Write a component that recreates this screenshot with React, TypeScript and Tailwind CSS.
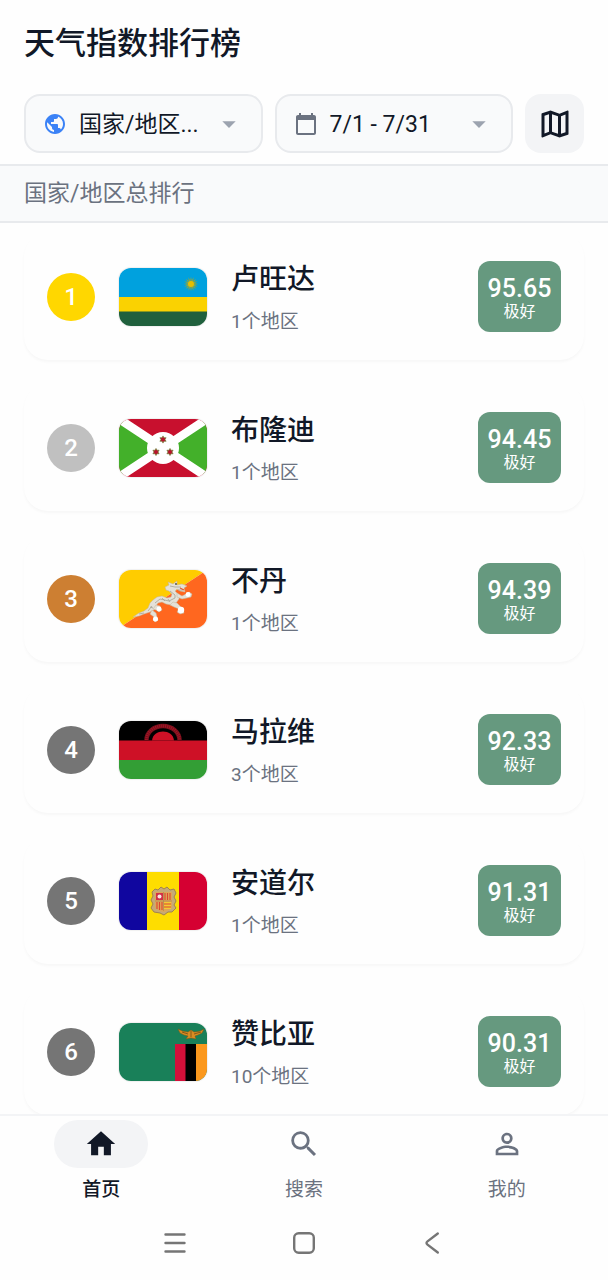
import type { ReactNode } from "react";
import {
  MdArrowDropDown,
  MdCalendarToday,
  MdHome,
  MdOutlineMap,
  MdPersonOutline,
  MdPublic,
  MdSearch,
} from "react-icons/md";

const star = (cx: number, cy: number, outer: number, inner: number, points: number) =>
  Array.from({ length: points * 2 }, (_, i) => {
    const r = i % 2 === 0 ? outer : inner;
    const a = (Math.PI * i) / points - Math.PI / 2;
    return `${(cx + r * Math.cos(a)).toFixed(2)},${(cy + r * Math.sin(a)).toFixed(2)}`;
  }).join(" ");

function Flag({ label, children }: { label: string; children: ReactNode }) {
  return (
    <svg
      viewBox="0 0 88 58"
      role="img"
      aria-label={label}
      className="h-[58px] w-[88px] shrink-0 rounded-xl shadow-[0_0_1px_1px_rgba(0,0,0,0.06)]"
    >
      {children}
    </svg>
  );
}

const Rwanda = () => (
  <Flag label="卢旺达">
    <rect width="88" height="29" fill="#00a1de" />
    <rect y="29" width="88" height="15" fill="#fad201" />
    <rect y="43.500" width="88" height="15" fill="#20603d" />
    <polygon points={star(72, 16, 7.2, 3.6, 16)} fill="#9fa62b" />
    <circle cx="72" cy="16" r="3.600" fill="#e5be01" stroke="#4b9d87" strokeWidth="0.700" />
  </Flag>
);

const Burundi = () => (
  <Flag label="布隆迪">
    <rect width="88" height="58" fill="#c8102e" />
    <path d="M0 0 44 29 0 58ZM88 0 44 29 88 58Z" fill="#43b02a" />
    <path d="M0 0 88 58M88 0 0 58" stroke="#fff" strokeWidth="8.500" />
    <circle cx="44" cy="29" r="16" fill="#fff" />
    {[
      [44, 20.5],
      [37, 33],
      [51, 33],
    ].map(([x, y]) => (
      <polygon
        key={`${x}-${y}`}
        points={star(x, y, 3.6, 2, 6)}
        fill="#b8142d"
        stroke="#5f7d2a"
        strokeWidth="0.600"
      />
    ))}
  </Flag>
);

const Bhutan = () => (
  <Flag label="不丹">
    <path d="M0 0H88L0 58Z" fill="#ffcc00" />
    <path d="M88 0V58H0Z" fill="#ff671f" />
    <g stroke="#c4b79c" strokeWidth="0.500" fill="#e4e1d8" strokeLinejoin="round">
      <path d="M14 47 20 43 25 41 29 38 31 33 34 30 38 27 43 26 48 28 52 27 53 24 50 21 47 20 46 17 50 15 49 12 54 14 58 11 58 15 63 14 68 16 65 18 66 22 61 21 58 19 56 21 60 25 60 29 57 33 52 35 47 34 43 32 39 33 37 36 35 40 31 42 25 44 20 46Z" />
      <path d="M58 23 63 26 67 24 70 22 73 24 72 27 68 28 63 29 58 27ZM54 32 58 33 62 37 64 39 65 43 61 44 58 42 60 39 55 37 51 35ZM37 35 41 36 43 40 40 42 37 40 34 39ZM33 40 37 43 38 47 39 50 36 52 34 50 35 47 31 44Z" />
    </g>
    <g fill="#fff">
      <circle cx="69" cy="24.500" r="2.400" />
      <circle cx="62" cy="40" r="3.200" />
      <circle cx="40" cy="39" r="2.400" />
      <circle cx="36.500" cy="49" r="2.500" />
    </g>
    <path
      d="M20 44 25 43M29 41 33 36M36 33 41 29 50 31 56 28 56 25 51 21M51 16 56 17 62 17M59 20 64 20M43 28 46 31M49 29 51 32M31 37 34 38"
      fill="none"
      stroke="#a3a297"
      strokeWidth="0.800"
    />
    <circle cx="57" cy="14" r="0.900" fill="#4a4a44" />
    <path d="M61 18 65 20" stroke="#e4502a" strokeWidth="1.200" />
  </Flag>
);

const Malawi = () => (
  <Flag label="马拉维">
    <rect width="88" height="20" fill="#000" />
    <rect y="19.500" width="88" height="20" fill="#ce1126" />
    <rect y="39" width="88" height="19" fill="#339e35" />
    <path d="M27.500 19A16.500 14 0 0 1 60.500 19" fill="none" stroke="#76101c" strokeWidth="4.500" />
    <path
      d="M27.500 19A16.500 14 0 0 1 60.500 19"
      fill="none"
      stroke="#a31525"
      strokeWidth="3"
      strokeDasharray="1 1"
    />
    <path d="M33 19.500C34 7.500 54 7.500 55 19.500Z" fill="#ce1126" />
  </Flag>
);

const Andorra = () => (
  <Flag label="安道尔">
    <rect width="29" height="58" fill="#10069f" />
    <rect x="28" width="32" height="58" fill="#fedd00" />
    <rect x="60" width="28" height="58" fill="#d50032" />
    <path
      d="M33 20 36 17 39 18 42 15 45 17 48 15 51 18 55 17 57 21 55 25 57 29 55 33 57 36 53 40 49 40 45 43 41 41 35 40 32 36 34 32 32 28 34 24Z"
      fill="#c6aa76"
      stroke="#a08250"
      strokeWidth="1"
    />
    <path d="M36 20H53V35Q52 38 44.500 40Q37 38 36 35Z" fill="#dfa558" />
    <rect x="37" y="21" width="7" height="7" fill="#d22f45" />
    <circle cx="40.500" cy="24.500" r="2" fill="#f6e7e2" />
    <path d="M46 21V28M48.500 21V28M51 21V28M38 30V37M40.500 30V38M43 30V38" stroke="#dc4630" strokeWidth="1.100" />
    <rect x="45" y="30" width="7" height="7" fill="#f4ca35" />
    <path d="M45 32H52M45 35H52" stroke="#dc4630" strokeWidth="1" />
    <path d="M36 29H53M44.500 20V39" stroke="#a98b52" strokeWidth="0.700" />
  </Flag>
);

const Zambia = () => (
  <Flag label="赞比亚">
    <rect width="88" height="58" fill="#198059" />
    <rect x="56" y="21" width="11" height="37" fill="#d4103a" />
    <rect x="66.500" y="21" width="11" height="37" fill="#000" />
    <rect x="77" y="21" width="11" height="37" fill="#fb981d" />
    <path
      d="M59 6Q64 9 69 9L72 7 75 9Q81 9 85 6L83 10 79 12 76 13 77 16 72 15 67 16 69 13 65 12 61 10Z"
      fill="#d98c22"
      stroke="#7d5519"
      strokeWidth="0.500"
    />
    <path d="M63 9 69 11M82 9 75 11M72 8V14" stroke="#714b17" strokeWidth="0.800" />
  </Flag>
);

const ranking = [
  { name: "卢旺达", regions: 1, score: "95.65", level: "极好", flag: <Rwanda />, medal: "bg-[#ffd700]" },
  { name: "布隆迪", regions: 1, score: "94.45", level: "极好", flag: <Burundi />, medal: "bg-[#c0c0c0]" },
  { name: "不丹", regions: 1, score: "94.39", level: "极好", flag: <Bhutan />, medal: "bg-[#cd7f32]" },
  { name: "马拉维", regions: 3, score: "92.33", level: "极好", flag: <Malawi />, medal: "bg-[#757575]" },
  { name: "安道尔", regions: 1, score: "91.31", level: "极好", flag: <Andorra />, medal: "bg-[#757575]" },
  { name: "赞比亚", regions: 10, score: "90.31", level: "极好", flag: <Zambia />, medal: "bg-[#757575]" },
];

const tabs = [
  { label: "首页", Icon: MdHome, active: true },
  { label: "搜索", Icon: MdSearch, active: false },
  { label: "我的", Icon: MdPersonOutline, active: false },
];

function FilterButton({ icon, text }: { icon: ReactNode; text: string }) {
  return (
    <button
      type="button"
      className="flex h-[59px] min-w-0 flex-1 items-center rounded-2xl border-2 border-[#e8eaed] bg-[#f9fafb] pr-4 pl-[17px]"
    >
      {icon}
      <span className="ml-3 min-w-0 flex-1 pt-0.5 text-left text-[23px] leading-8 whitespace-nowrap">{text}</span>
      <MdArrowDropDown className="ml-1 size-8 shrink-0 text-[#9ca3af]" />
    </button>
  );
}

export default function App() {
  return (
    <div className="flex h-screen flex-col overflow-hidden bg-[#fefefe] font-[Roboto,'Noto_Sans_CJK_SC',sans-serif] text-[#111827]">
      <header className="shrink-0 px-6">
        <h1 className="pt-[21px] text-[31px] leading-[46px] font-medium">天气指数排行榜</h1>
        <div className="flex gap-3 pt-[27px] pb-[11px]">
          <FilterButton icon={<MdPublic className="size-6 shrink-0 text-[#3b82f6]" />} text="国家/地区..." />
          <FilterButton icon={<MdCalendarToday className="size-6 shrink-0 text-[#6b7280]" />} text="7/1 - 7/31" />
          <button
            type="button"
            aria-label="地图"
            className="flex size-[59px] shrink-0 items-center justify-center rounded-2xl bg-[#f3f4f6]"
          >
            <MdOutlineMap className="size-9" />
          </button>
        </div>
      </header>

      <main className="flex min-h-0 flex-1 flex-col">
        <h2 className="shrink-0 border-y-2 border-[#e8eaed] bg-[#f9fafb] px-6 pt-[13px] pb-3 text-[23px] leading-[30px] text-[#6b7280]">
          国家/地区总排行
        </h2>
        <ol className="flex min-h-0 flex-1 flex-col gap-6 overflow-hidden px-6 pt-[10px]">
          {ranking.map((item, index) => (
            <li
              key={item.name}
              className="flex h-[127px] shrink-0 items-center gap-6 rounded-3xl bg-[#fefefe] px-[23px] shadow-[0_2px_3px_rgba(0,0,0,0.03)]"
            >
              <span
                className={`flex size-12 shrink-0 items-center justify-center rounded-full text-2xl font-medium text-white ${item.medal}`}
              >
                {index + 1}
              </span>
              {item.flag}
              <div className="min-w-0 flex-1 pt-2">
                <h3 className="text-[28px] leading-10 font-medium">{item.name}</h3>
                <p className="mt-0.5 text-[19px] leading-10 text-[#6b7280]">{item.regions}个地区</p>
              </div>
              <div className="flex h-[71px] w-[83px] shrink-0 flex-col items-center justify-center rounded-xl bg-[#66997f] pt-1 text-white">
                <span className="text-[25px] leading-[26px] font-medium">{item.score}</span>
                <span className="text-base leading-5">{item.level}</span>
              </div>
            </li>
          ))}
        </ol>
      </main>

      <nav className="grid shrink-0 grid-cols-3 border-t-2 border-[#f3f4f6] pt-1">
        {tabs.map(({ label, Icon, active }) => (
          <a
            key={label}
            href="#"
            aria-current={active ? "page" : undefined}
            className={`flex flex-col items-center ${active ? "font-medium text-[#111827]" : "text-[#6b7280]"}`}
          >
            <span
              className={`flex h-12 w-[94px] items-center justify-center rounded-full ${active ? "bg-[#f3f4f6]" : ""}`}
            >
              <Icon className="size-[34px]" />
            </span>
            <span className="mt-1.5 text-[19px] leading-8">{label}</span>
          </a>
        ))}
      </nav>

      <div className="flex h-[74px] shrink-0 items-center justify-center gap-[101px] text-[#757575]">
        <button type="button" aria-label="最近任务">
          <svg viewBox="0 0 28 28" className="size-7" stroke="currentColor" strokeWidth="2.400" strokeLinecap="round">
            <path d="M4.500 5.500H23.500M4.500 14H23.500M4.500 22.500H23.500" />
          </svg>
        </button>
        <button type="button" aria-label="主屏幕">
          <svg viewBox="0 0 28 28" className="size-7" fill="none" stroke="currentColor" strokeWidth="2.400">
            <rect x="4.200" y="4.200" width="19.600" height="19.600" rx="4.500" />
          </svg>
        </button>
        <button type="button" aria-label="返回">
          <svg
            viewBox="0 0 28 28"
            className="size-7"
            fill="none"
            stroke="currentColor"
            strokeWidth="2.400"
            strokeLinecap="round"
          >
            <path d="M18.800 4.500 8.500 12.400Q6.500 14 8.500 15.600L18.800 23.500" />
          </svg>
        </button>
      </div>
    </div>
  );
}
